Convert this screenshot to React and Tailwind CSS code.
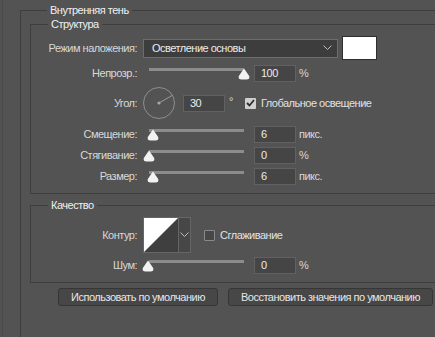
import React from "react";

const Label = ({ children }) => (
  <div className="w-[106px] shrink-0 text-right text-[#d8d8d8]">{children}</div>
);

const Legend = ({ children }) => (
  <div className="-mt-[7px] ml-[17px] w-fit bg-[#535353] px-[3px] leading-[13px] text-[#f0f0f0]">
    {children}
  </div>
);

const Slider = ({ thumb }) => (
  <div className="relative ml-[6px] h-[17px] w-[105px] shrink-0">
    <div className="absolute left-[6px] top-[3px] h-[3px] w-[95px] bg-[#8c8c8c]" />
    <svg
      className="absolute top-[3px]"
      style={{ left: thumb - 6 }}
      width="12"
      height="12"
      viewBox="0 0 12 12"
    >
      <path d="M6 0.5 L11.2 8 Q12 11.5 8.5 11.5 L3.5 11.5 Q0 11.5 0.8 8 Z" fill="#f2f2f2" />
    </svg>
  </div>
);

const NumInput = ({ value, className = "" }) => (
  <div
    className={
      "flex h-[17px] w-[42px] shrink-0 items-center border border-[#616161] bg-[#454545] px-[6px] text-[#ececec] " +
      className
    }
  >
    {value}
  </div>
);

const SliderRow = ({ label, thumb, value, unit, className = "" }) => (
  <div className={"flex h-[17px] items-center " + className}>
    <Label>{label}</Label>
    <Slider thumb={thumb} />
    <NumInput value={value} className="ml-[6px]" />
    <div className="ml-[3px] text-[#d8d8d8]">{unit}</div>
  </div>
);

const Chevron = () => (
  <svg width="9" height="6" viewBox="0 0 9 6">
    <path d="M0.5 0.5 L4.5 4.5 L8.5 0.5" stroke="#bdbdbd" strokeWidth="1" fill="none" />
  </svg>
);

export default function App() {
  return (
    <div className="h-[337px] w-[435px] overflow-hidden bg-[#535353] font-['Liberation_Sans',Arial,sans-serif] text-[11px] leading-[13px] tracking-[-0.5px] text-[#dcdcdc]">
      <div className="ml-[2px] h-full border-l border-[#4a4a4a] pl-[17px] pt-[10px]">
        <div className="h-[400px] w-[520px] border-l border-t border-[#3e3e3e] pl-[9px]">
          <Legend>Внутренняя тень</Legend>

          {/* Структура */}
          <div className="mt-[7px] w-[480px] border-b border-l border-t border-[#3e3e3e] pb-[8px]">
            <Legend>Структура</Legend>

            <div className="mt-[5px] flex h-[24px] items-center">
              <Label>Режим наложения:</Label>
              <div className="ml-[6px] flex h-[19px] w-[195px] items-center justify-between border border-[#2b7ad9] bg-[#3d3d3d] pl-[8px] pr-[5px] text-[#ececec]">
                <span>Осветление основы</span>
                <Chevron />
              </div>
              <div className="ml-[4px] h-[24px] w-[35px] border border-[#2e2e2e] bg-white" />
            </div>

            <SliderRow label="Непрозр.:" thumb={101} value="100" unit="%" className="mt-[5px]" />

            <div className="mt-[5px] flex h-[32px] items-center">
              <Label>Угол:</Label>
              <svg className="ml-[6px] shrink-0" width="32" height="32" viewBox="0 0 32 32">
                <circle cx="16" cy="16" r="15.5" stroke="#8e8e8e" strokeWidth="1" fill="none" />
                <line x1="16" y1="16" x2="29.4" y2="8.3" stroke="#9a9a9a" strokeWidth="1" />
                <circle cx="16" cy="16" r="1.6" fill="#a8a8a8" />
              </svg>
              <NumInput value="30" className="ml-[8px]" />
              <div className="-mt-[4px] ml-[4px] text-[#d8d8d8]">°</div>
              <div className="ml-[12px] flex h-[11px] w-[11px] items-center justify-center rounded-[1px] bg-[#cfcfcf]">
                <svg width="9" height="8" viewBox="0 0 9 8">
                  <path d="M1 4 L3.5 6.5 L8 1" stroke="#2c2c2c" strokeWidth="1.8" fill="none" />
                </svg>
              </div>
              <div className="ml-[5px] text-[#e2e2e2]">Глобальное освещение</div>
            </div>

            <SliderRow label="Смещение:" thumb={10} value="6" unit="пикс." className="mt-[7px]" />
            <SliderRow label="Стягивание:" thumb={6} value="0" unit="%" className="mt-[4px]" />
            <SliderRow label="Размер:" thumb={10} value="6" unit="пикс." className="mt-[4px]" />
          </div>

          {/* Качество */}
          <div className="mt-[11px] w-[480px] border-b border-l border-t border-[#3e3e3e] pb-[8px]">
            <Legend>Качество</Legend>

            <div className="mt-[5px] flex h-[36px] items-center">
              <Label>Контур:</Label>
              <div className="ml-[6px] flex h-[36px] border border-[#666666]">
                <svg width="34" height="34" viewBox="0 0 34 34" className="block">
                  <rect width="34" height="34" fill="#3f3f3f" />
                  <polygon points="0,0 34,0 0,34" fill="#ffffff" />
                </svg>
                <div className="flex w-[12px] items-center justify-center border-l border-[#666666] bg-[#474747]">
                  <Chevron />
                </div>
              </div>
              <div className="ml-[13px] h-[11px] w-[11px] rounded-[1px] border border-[#8a8a8a] bg-[#474747]" />
              <div className="ml-[5px] text-[#e2e2e2]">Сглаживание</div>
            </div>

            <SliderRow label="Шум:" thumb={5} value="0" unit="%" className="mt-[4px]" />
          </div>

          <div className="mt-[5px] flex">
            <div className="ml-[28px] flex h-[18px] w-[160px] items-center justify-center rounded-[3px] border border-[#363636] bg-[#474747] text-[#e6e6e6]">
              Использовать по умолчанию
            </div>
            <div className="ml-[10px] flex h-[18px] w-[205px] items-center justify-center rounded-[3px] border border-[#363636] bg-[#474747] text-[#e6e6e6]">
              Восстановить значения по умолчанию
            </div>
          </div>
        </div>
      </div>
    </div>
  );
}
